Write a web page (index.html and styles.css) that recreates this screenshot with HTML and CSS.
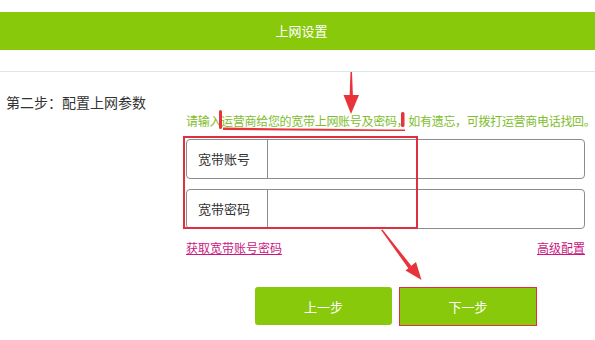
FILE: index.html
```html
<!DOCTYPE html>
<html lang="zh-CN">
<head>
    <meta charset="UTF-8">
    <meta name="viewport" content="width=device-width, initial-scale=1.0">
    <title>上网设置</title>
    <link rel="stylesheet" href="styles.css">
</head>
<body>
    <div class="page">
        <div class="header">上网设置</div>
        <div class="divider"></div>

        <div class="content">
            <div class="step-title">第二步：配置上网参数</div>
            <div class="form">
                <p class="hint">请输入运营商给您的宽带上网账号及密码，如有遗忘，可拨打运营商电话找回。</p>
                <div class="field">
                    <label class="field-label">宽带账号</label>
                    <input class="field-input" type="text">
                </div>
                <div class="field">
                    <label class="field-label">宽带密码</label>
                    <input class="field-input" type="password">
                </div>
                <div class="links">
                    <a href="#">获取宽带账号密码</a>
                    <a href="#">高级配置</a>
                </div>
                <div class="actions">
                    <button class="btn">上一步</button>
                    <button class="btn marked">下一步</button>
                </div>
            </div>
        </div>

        <!-- red markup drawn over the screenshot -->
        <svg class="marks" width="595" height="340" viewBox="0 0 595 340">
            <g fill="#e8333b">
                <polygon points="350.5,72 352,72 353,98 349.5,98"/>
                <polygon points="343.5,95 359,95 351,114"/>
                <rect x="219" y="110" width="3" height="19" rx="1.5"/>
                <path d="M223 127.5 Q300 128.5 405 129.5 L405 131 Q300 130.5 223 130 Z"/>
                <rect x="401" y="112" width="3.5" height="15" rx="1.5"/>
                <polygon points="381,230 382.5,229.5 411.5,266 408.5,268.5"/>
                <polygon points="405.5,270.5 416,262 421.5,280"/>
            </g>
            <rect x="184" y="137" width="233" height="91" fill="none" stroke="#e0303f" stroke-width="1.2" shape-rendering="crispEdges"/>
        </svg>
    </div>
</body>
</html>
```

FILE: styles.css
```css
* {
    margin: 0;
    padding: 0;
    box-sizing: border-box;
}

body {
    background: #fff;
    font-family: "Noto Sans CJK SC", "Noto Sans", sans-serif;
    color: #333;
    overflow: hidden;
}

.page {
    position: relative;
    width: 595px;
    height: 340px;
    padding-top: 12px;
}

.header {
    height: 38px;
    line-height: 38px;
    background: #88c90c;
    color: #fff;
    font-size: 13px;
    text-align: center;
    padding-left: 8px;
}

.divider {
    height: 1px;
    margin-top: 21px;
    background: #dbe5eb;
}

.content {
    display: grid;
    grid-template-columns: 186px 399px;
    align-items: start;
}

.step-title {
    padding: 20px 0 0 6px;
    font-size: 14px;
    line-height: 20px;
    color: #333;
    white-space: nowrap;
}

.form {
    display: flex;
    flex-direction: column;
}

.hint {
    margin-top: 39px;
    font-size: 12px;
    letter-spacing: -0.3px;
    line-height: 20px;
    color: #80bd2c;
    white-space: nowrap;
}

.field {
    display: flex;
    height: 40px;
    margin-top: 8px;
    border: 1px solid #8c8c8c;
    border-radius: 4px;
}

.field + .field {
    margin-top: 10px;
}

.field-label {
    width: 81px;
    flex: none;
    padding-left: 11px;
    line-height: 38px;
    font-size: 13px;
    color: #333;
    border-right: 1px solid #8c8c8c;
}

.field-input {
    flex: 1;
    min-width: 0;
    border: none;
    outline: none;
    background: transparent;
    border-radius: 0 4px 4px 0;
}

.links {
    display: flex;
    justify-content: space-between;
    margin-top: 9px;
    line-height: 20px;
    font-size: 12px;
}

.links a {
    color: #c9197f;
    text-decoration: underline;
}

.actions {
    display: flex;
    gap: 7px;
    margin: 29px 0 0 69px;
}

.btn {
    width: 137px;
    height: 38px;
    border: none;
    border-radius: 3px;
    background: #88c90c;
    color: #fff;
    font-family: inherit;
    font-size: 13px;
}

.btn.marked {
    height: 39px;
    width: 138px;
    border: 1px solid #e0303f;
    border-radius: 0;
}

.marks {
    position: absolute;
    top: 0;
    left: 0;
    pointer-events: none;
}
```
